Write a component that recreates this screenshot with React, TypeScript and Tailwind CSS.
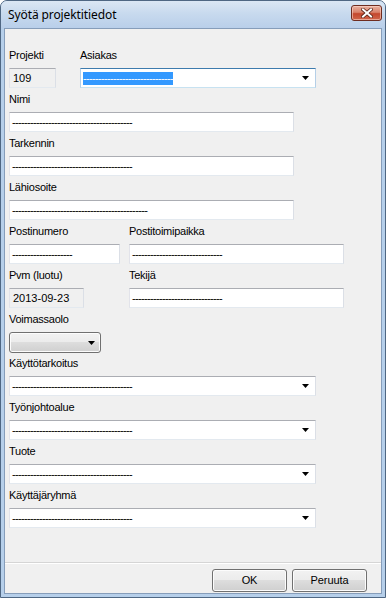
import React from "react";

function Label({ children }: { children: React.ReactNode }) {
  return <div className="h-[13px] leading-[13px] text-[11px] tracking-[-0.25px] whitespace-nowrap">{children}</div>;
}

function Dashes({ n, className = "" }: { n: number; className?: string }) {
  return (
    <span className={`inline-block whitespace-nowrap tracking-[-0.66px] leading-[13px] h-[13px] ${className}`}>
      {"-".repeat(n)}
    </span>
  );
}

function TextBox({ w, children, readOnly = false }: { w: string; children?: React.ReactNode; readOnly?: boolean }) {
  return (
    <div
      className={`${w} h-[20px] flex items-center pl-[2px] border border-t-[#abadb3] border-l-[#e2e3ea] border-r-[#dbdfe6] border-b-[#e3e9ef] text-[11px] overflow-hidden whitespace-nowrap ${
        readOnly ? "bg-[#f0f0f0]" : "bg-white"
      }`}
    >
      {children}
    </div>
  );
}

function Arrow() {
  return (
    <svg width="7" height="4" viewBox="0 0 7 4" className="block">
      <path d="M0 0H7L3.5 4Z" fill="#000" />
    </svg>
  );
}

function Combo({ w, children, focused = false }: { w: string; children?: React.ReactNode; focused?: boolean }) {
  return (
    <div
      className={`${w} h-[20px] flex items-center bg-white border text-[11px] overflow-hidden whitespace-nowrap ${
        focused
          ? "border-t-[#3d7bad] border-l-[#b5cfe7] border-r-[#b5cfe7] border-b-[#c7e2f1]"
          : "border-t-[#abadb3] border-l-[#e2e3ea] border-r-[#dbdfe6] border-b-[#e3e9ef]"
      }`}
    >
      <div className="flex-1 min-w-0 pl-[2px] flex items-center">{children}</div>
      <div className="w-[17px] h-full shrink-0 flex items-center justify-center pr-[3px]">
        <Arrow />
      </div>
    </div>
  );
}

function Field({ label, children, first = false }: { label: string; children: React.ReactNode; first?: boolean }) {
  return (
    <div className={first ? "" : "mt-[5px]"}>
      <Label>{label}</Label>
      <div className="mt-[6px]">{children}</div>
    </div>
  );
}

function Button({ children }: { children: React.ReactNode }) {
  return (
    <div className="w-[75px] h-[23px] flex items-center justify-center rounded-[3px] border border-[#707070] bg-[linear-gradient(180deg,#f2f2f2_0%,#ebebeb_50%,#dddddd_50%,#cfcfcf_100%)] shadow-[inset_0_0_0_1px_#fcfcfc] text-[11px] tracking-[-0.1px]">
      {children}
    </div>
  );
}

export default function App() {
  return (
    <div className="w-[386px] h-[598px] font-['Liberation_Sans',Arial,sans-serif] text-black">
      <div className="w-full h-full flex flex-col border border-[#4f6783] rounded-t-[7px] bg-[#b6cfea] overflow-hidden">
        <div className="h-[27px] shrink-0 flex items-start justify-between bg-[linear-gradient(180deg,#dbe7f4_0%,#c8daee_45%,#b9cfea_100%)]">
          <div className="h-[27px] flex items-center pl-[7px] text-[12px] font-['Noto_Sans',sans-serif] text-black tracking-[-0.1px]">
            Syötä projektitiedot
          </div>
          <div className="mt-[4px] mr-[3px] w-[31px] h-[16px] rounded-[3px] border border-[#6e2c20] bg-[linear-gradient(180deg,#e9b2a2_0%,#d9826b_45%,#c4472d_55%,#d0664c_100%)] shadow-[inset_0_0_0_1px_rgba(255,220,210,0.55)] flex items-center justify-center">
            <svg width="12" height="10" viewBox="0 0 12 10">
              <path d="M2 1.5L10 8.5M10 1.5L2 8.5" stroke="#5a2418" strokeWidth="3.6" strokeLinecap="square" />
              <path d="M2 1.5L10 8.5M10 1.5L2 8.5" stroke="#ffffff" strokeWidth="2" strokeLinecap="square" />
            </svg>
          </div>
        </div>
        <div className="mx-[3px] mb-[3px] flex-1 border border-[#869dba] bg-[#f0f0f0] flex flex-col">
          <div className="flex-1 pt-[20px] pl-[4px] flex flex-col">
            <div className="flex">
              <div className="w-[71px]">
                <Field label="Projekti" first>
                  <TextBox w="w-[47px]" readOnly>
                    <span className="pl-[1px]">109</span>
                  </TextBox>
                </Field>
              </div>
              <Field label="Asiakas" first>
                <Combo w="w-[236px]" focused>
                  <Dashes n={30} className="bg-[#3399ff] text-white" />
                </Combo>
              </Field>
            </div>
            <Field label="Nimi">
              <TextBox w="w-[285px]">
                <Dashes n={40} />
              </TextBox>
            </Field>
            <Field label="Tarkennin">
              <TextBox w="w-[285px]">
                <Dashes n={40} />
              </TextBox>
            </Field>
            <Field label="Lähiosoite">
              <TextBox w="w-[285px]">
                <Dashes n={45} />
              </TextBox>
            </Field>
            <div className="flex">
              <div className="w-[120px]">
                <Field label="Postinumero">
                  <TextBox w="w-[111px]">
                    <Dashes n={20} />
                  </TextBox>
                </Field>
              </div>
              <Field label="Postitoimipaikka">
                <TextBox w="w-[215px]">
                  <Dashes n={30} />
                </TextBox>
              </Field>
            </div>
            <div className="flex">
              <div className="w-[120px]">
                <Field label="Pvm (luotu)">
                  <TextBox w="w-[75px]" readOnly>
                    <span className="pl-[1px]">2013-09-23</span>
                  </TextBox>
                </Field>
              </div>
              <Field label="Tekijä">
                <TextBox w="w-[215px]">
                  <Dashes n={30} />
                </TextBox>
              </Field>
            </div>
            <div className="mt-[5px]">
              <Label>Voimassaolo</Label>
              <div className="mt-[6px] w-[92px] h-[21px] flex items-center justify-end pr-[5px] rounded-[3px] border border-[#707070] bg-[linear-gradient(180deg,#f2f2f2_0%,#ebebeb_50%,#dddddd_50%,#cfcfcf_100%)] shadow-[inset_0_0_0_1px_#fcfcfc]">
                <Arrow />
              </div>
            </div>
            <div className="mt-[4px]">
              <Label>Käyttötarkoitus</Label>
              <div className="mt-[6px]">
                <Combo w="w-[307px]">
                  <Dashes n={40} />
                </Combo>
              </div>
            </div>
            <Field label="Työnjohtoalue">
              <Combo w="w-[307px]">
                <Dashes n={40} />
              </Combo>
            </Field>
            <Field label="Tuote">
              <Combo w="w-[307px]">
                <Dashes n={40} />
              </Combo>
            </Field>
            <Field label="Käyttäjäryhmä">
              <Combo w="w-[307px]">
                <Dashes n={40} />
              </Combo>
            </Field>
          </div>
          <div className="border-t border-[#d5d5d5]">
            <div className="border-t border-white pt-[5px] pb-[1px] pr-[14px] flex justify-end gap-[5px]">
              <Button>OK</Button>
              <Button>Peruuta</Button>
            </div>
          </div>
        </div>
      </div>
    </div>
  );
}
